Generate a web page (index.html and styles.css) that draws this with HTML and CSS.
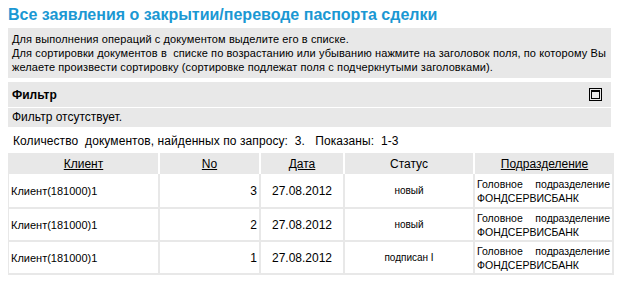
FILE: index.html
```html
<!DOCTYPE html>
<html lang="ru">
<head>
<meta charset="utf-8">
<link rel="stylesheet" href="styles.css">
</head>
<body>
<div class="page">
  <h1 class="title">Все заявления о закрытии/переводе паспорта сделки</h1>
  <div class="info">
    Для выполнения операций с документом выделите его в списке.<br>
    Для сортировки документов в&nbsp; списке по возрастанию или убыванию нажмите на заголовок поля, по которому Вы желаете произвести сортировку (сортировке подлежат поля с подчеркнутыми заголовками).
  </div>
  <div class="filter">
    <div class="filter-head">
      <span>Фильтр</span>
      <span class="toggle"><span class="toggle-in"></span></span>
    </div>
    <div class="filter-body">Фильтр отсутствует.</div>
  </div>
  <div class="count">Количество&nbsp; документов, найденных по запросу:&nbsp; 3.&nbsp;&nbsp; Показаны:&nbsp; 1-3</div>
  <table class="grid">
    <colgroup>
      <col class="c1"><col class="c2"><col class="c3"><col class="c4"><col class="c5">
    </colgroup>
    <thead>
      <tr>
        <th><a>Клиент</a></th>
        <th><a>No</a></th>
        <th><a>Дата</a></th>
        <th>Статус</th>
        <th><a>Подразделение</a></th>
      </tr>
    </thead>
    <tbody>
      <tr>
        <td class="client">Клиент(181000)1</td>
        <td class="num">3</td>
        <td class="date">27.08.2012</td>
        <td class="status">новый</td>
        <td class="dept">Головное подразделение ФОНДСЕРВИСБАНК</td>
      </tr>
      <tr>
        <td class="client">Клиент(181000)1</td>
        <td class="num">2</td>
        <td class="date">27.08.2012</td>
        <td class="status">новый</td>
        <td class="dept">Головное подразделение ФОНДСЕРВИСБАНК</td>
      </tr>
      <tr>
        <td class="client">Клиент(181000)1</td>
        <td class="num">1</td>
        <td class="date">27.08.2012</td>
        <td class="status">подписан I</td>
        <td class="dept">Головное подразделение ФОНДСЕРВИСБАНК</td>
      </tr>
    </tbody>
  </table>
</div>
</body>
</html>
```

FILE: styles.css
```css
html, body {
  margin: 0;
  padding: 0;
  background: #fff;
}
body {
  font-family: "Liberation Sans", Arial, sans-serif;
  color: #000;
}
.page {
  padding: 5px 11px 0 8px;
}
.title {
  margin: 0 0 3px 0;
  font-size: 16px;
  font-weight: bold;
  color: #1b98d3;
  line-height: 20px;
}
.info {
  background: #e8e8e8;
  font-size: 11px;
  letter-spacing: 0.1px;
  line-height: 14px;
  padding: 4px 1px 4px 4px;
}
.filter {
  margin-top: 4px;
}
.filter-head {
  background: #e8e8e8;
  display: flex;
  align-items: center;
  justify-content: space-between;
  height: 25px;
  padding: 0 3px 0 4px;
  font-size: 12px;
  font-weight: bold;
  border-bottom: 1px solid #fff;
}
.toggle {
  width: 11px;
  height: 11px;
  border: 1px solid #000;
  display: flex;
  align-items: center;
  justify-content: center;
  margin-right: 6px;
}
.toggle-in {
  width: 7px;
  height: 6px;
  border: 1px solid #000;
  border-top-width: 2px;
}
.filter-body {
  background: #e8e8e8;
  font-size: 12px;
  height: 19px;
  line-height: 19px;
  padding-left: 4px;
}
.count {
  font-size: 12px;
  letter-spacing: 0.08px;
  line-height: 14px;
  padding: 7px 0 5px 5px;
}
.grid {
  border-collapse: separate;
  border-spacing: 0;
  width: 605px;
  table-layout: fixed;
  border-left: 1px solid #e8e8e8;
  border-bottom: 2px solid #e8e8e8;
}
.c1 { width: 151px; }
.c2 { width: 101px; }
.c3 { width: 84px; }
.c4 { width: 130px; }
.c5 { width: 139px; }
.grid th {
  background: #e8e8e8;
  font-weight: normal;
  font-size: 12px;
  height: 21px;
  padding: 0;
  text-align: center;
  border-right: 2px solid #fff;
}
.grid th:last-child {
  border-right: none;
}
.grid th a {
  text-decoration: underline;
  color: #000;
}
.grid td {
  height: 31px;
  padding: 0 2px;
  border-right: 2px solid #e8e8e8;
  border-top: 2px solid #e8e8e8;
  vertical-align: middle;
}
.grid tbody tr:first-child td {
  border-top: none;
  height: 33px;
}
.client {
  font-size: 11px;
}
.num {
  font-size: 12px;
  text-align: right;
}
.date {
  font-size: 12px;
  text-align: center;
}
.status {
  font-size: 10px;
  text-align: center;
}
.dept {
  font-size: 10.5px;
  line-height: 14px;
  text-align: justify;
}
```
